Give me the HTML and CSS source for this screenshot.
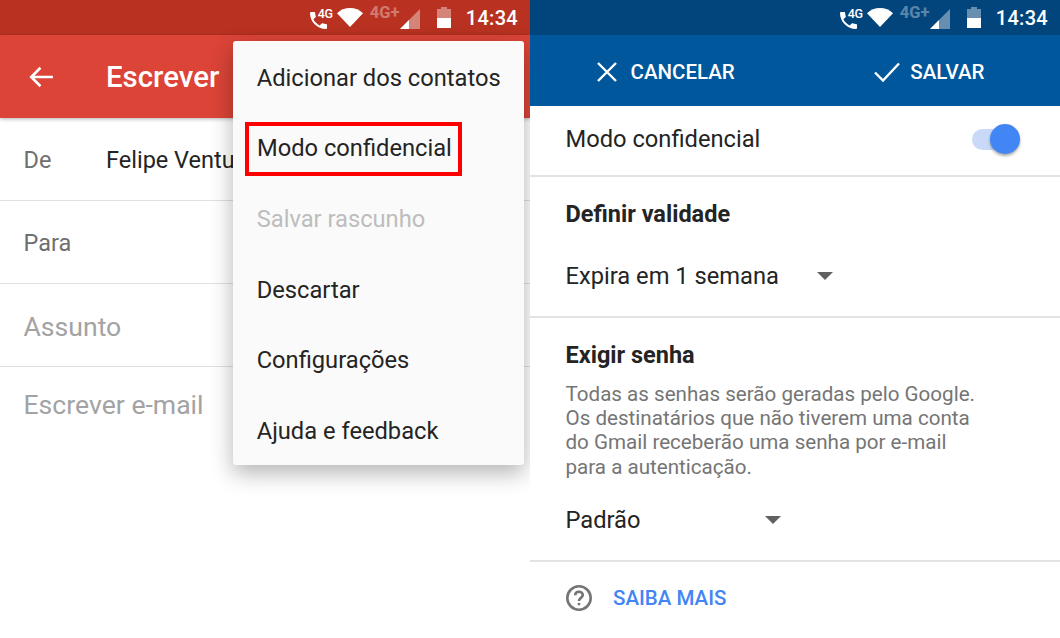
FILE: index.html
```html
<!DOCTYPE html>
<html lang="pt-BR">
<head>
  <meta charset="UTF-8" />
  <title>Modo confidencial</title>
  <link rel="stylesheet" href="styles.css">
</head>
<body>

  <div class="phone compose">
    <div class="status-bar">
      <svg class="ic-call" viewBox="3 3 18 18"><path d="M6.6 10.8c1.4 2.8 3.8 5.1 6.6 6.6l2.2-2.2c.3-.3.7-.4 1-.2 1.1.4 2.300.6 3.600.6.600 0 1 .4 1 1V20c0 .6-.4 1-1 1C10.600 21 3 13.400 3 4c0-.6.400-1 1-1h3.500c.6 0 1 .4 1 1 0 1.300.2 2.500.6 3.600.1.300 0 .7-.2 1z"/></svg>
      <span class="tiny-4g">4G</span>
      <svg class="ic-wifi" viewBox="0 0 28 20" preserveAspectRatio="none"><path d="M14 20 0 5.500C3.800 2 8.700 0 14 0s10.200 2 14 5.500z"/></svg>
      <span class="net">4G+</span>
      <svg class="ic-signal" viewBox="0 0 20 20"><path class="dim" d="M20 0v20H0z"/><path d="M0 20 9 11v9z"/></svg>
      <div class="battery"><div class="battery-fill"></div></div>
      <span class="clock">14:34</span>
    </div>

    <div class="app-bar">
      <svg class="ic-back" viewBox="0 0 24 24"><path d="M23 12H3M11.500 3.500 3 12l8.500 8.500"/></svg>
      <span class="app-title">Escrever</span>
    </div>

    <div class="field">
      <span class="field-label">De</span>
      <span class="field-value">Felipe Ventura</span>
    </div>
    <div class="field">
      <span class="field-label">Para</span>
    </div>
    <div class="field subject">
      <span class="field-hint">Assunto</span>
    </div>
    <div class="field no-line">
      <span class="field-hint">Escrever e-mail</span>
    </div>

    <div class="menu">
      <div class="menu-item">Adicionar dos contatos</div>
      <div class="menu-item"><span class="highlight">Modo confidencial</span></div>
      <div class="menu-item disabled">Salvar rascunho</div>
      <div class="menu-item">Descartar</div>
      <div class="menu-item">Configurações</div>
      <div class="menu-item">Ajuda e feedback</div>
    </div>
  </div>

  <div class="phone settings">
    <div class="status-bar">
      <svg class="ic-call" viewBox="3 3 18 18"><path d="M6.6 10.8c1.4 2.8 3.8 5.1 6.6 6.6l2.2-2.2c.3-.3.7-.4 1-.2 1.1.4 2.300.6 3.600.6.600 0 1 .4 1 1V20c0 .6-.4 1-1 1C10.600 21 3 13.400 3 4c0-.6.400-1 1-1h3.500c.6 0 1 .4 1 1 0 1.300.2 2.500.6 3.600.1.300 0 .7-.2 1z"/></svg>
      <span class="tiny-4g">4G</span>
      <svg class="ic-wifi" viewBox="0 0 28 20" preserveAspectRatio="none"><path d="M14 20 0 5.500C3.800 2 8.700 0 14 0s10.200 2 14 5.500z"/></svg>
      <span class="net">4G+</span>
      <svg class="ic-signal" viewBox="0 0 20 20"><path class="dim" d="M20 0v20H0z"/><path d="M0 20 9 11v9z"/></svg>
      <div class="battery"><div class="battery-fill"></div></div>
      <span class="clock">14:34</span>
    </div>

    <div class="action-bar">
      <div class="action">
        <svg class="ic-action" viewBox="0 0 22 22"><path d="M2 2l18 18M20 2 2 20"/></svg>
        <span>CANCELAR</span>
      </div>
      <div class="action">
        <svg class="ic-action ic-check" viewBox="0 0 28 22"><path d="M2 11.500 10 19.500 26 2.500"/></svg>
        <span>SALVAR</span>
      </div>
    </div>

    <div class="section toggle-row">
      <span>Modo confidencial</span>
      <div class="switch"><div class="switch-knob"></div></div>
    </div>

    <div class="section expiry">
      <h3>Definir validade</h3>
      <div class="select">Expira em 1 semana <i class="caret"></i></div>
    </div>

    <div class="section password">
      <h3>Exigir senha</h3>
      <p>Todas as senhas serão geradas pelo Google. Os destinatários que não tiverem uma conta do Gmail receberão uma senha por e-mail para a autenticação.</p>
      <div class="select select-short">Padrão <i class="caret"></i></div>
    </div>

    <div class="learn-more">
      <svg class="ic-help" viewBox="0 0 24 24"><circle cx="12" cy="12" r="10.800"/><path d="M8.500 9.500c0-2 1.500-3.300 3.500-3.300s3.500 1.300 3.500 3.100c0 2.600-3.500 2.600-3.500 5.400"/><circle class="dot" cx="12" cy="17.600" r="1.300"/></svg>
      <span>SAIBA MAIS</span>
    </div>
  </div>

</body>
</html>
```

FILE: styles.css
```css
* {
  box-sizing: border-box;
}

body {
  margin: 0;
  width: 1060px;
  height: 638px;
  display: flex;
  overflow: hidden;
  background: #fff;
  font-family: Roboto, "Liberation Sans", sans-serif;
  color: #242424;
}

.phone {
  width: 530px;
  height: 638px;
  position: relative;
  overflow: hidden;
}

/* status bar */
.status-bar {
  height: 35px;
  display: flex;
  align-items: center;
  justify-content: flex-end;
  padding-right: 12px;
  color: #fff;
  background: #b93221;
}

.settings .status-bar {
  background: #02457d;
}

.ic-call {
  width: 17px;
  height: 17px;
  margin-top: 5px;
  fill: #fff;
}

.tiny-4g {
  width: 14px;
  margin: -9px 0 0 -9px;
  font-size: 12.500px;
  font-weight: 500;
  letter-spacing: -0.4px;
}

.ic-wifi {
  width: 26px;
  height: 19px;
  margin-left: 5px;
  fill: #fff;
}

.net {
  width: 30px;
  margin: -11px 0 0 7px;
  font-size: 16.500px;
  font-weight: 700;
  white-space: nowrap;
  opacity: 0.35;
}

.ic-signal {
  width: 20px;
  height: 20px;
  margin-top: 3px;
  fill: #fff;
}

.ic-signal .dim {
  opacity: 0.4;
}

.battery {
  width: 14px;
  height: 19px;
  margin: 2px 15px 0 17px;
  position: relative;
  background: rgba(255, 255, 255, 0.4);
}

.battery::before {
  content: "";
  position: absolute;
  top: -2px;
  left: 4px;
  width: 6px;
  height: 2px;
  background: rgba(255, 255, 255, 0.4);
}

.battery-fill {
  position: absolute;
  left: 0;
  right: 0;
  bottom: 0;
  height: 10px;
  background: #fff;
}

.clock {
  font-size: 20px;
  font-weight: 500;
  letter-spacing: 0.3px;
}

/* left: compose */
.app-bar {
  height: 83px;
  display: flex;
  align-items: center;
  padding-left: 28px;
  background: #db4437;
  color: #fff;
  box-shadow: 0 1px 4px rgba(0, 0, 0, 0.3);
  position: relative;
}

.ic-back {
  width: 26px;
  height: 26px;
  fill: none;
  stroke: #fff;
  stroke-width: 2.400;
}

.app-title {
  font-size: 29.400px;
  font-weight: 500;
  margin-left: 52px;
}

.field {
  height: 83px;
  display: flex;
  align-items: center;
  padding: 2px 0 0 23.500px;
  border-bottom: 1px solid #e0e0e0;
  font-size: 23.500px;
}

.subject {
  padding-top: 3px;
}

.no-line {
  border-bottom: none;
  height: 72px;
}

.field-label {
  width: 82.500px;
  color: #6f6f6f;
}

.field-value {
  white-space: nowrap;
}

.field-hint {
  font-size: 26.600px;
  color: #a3a3a3;
}

.menu {
  position: absolute;
  top: 41px;
  left: 233px;
  width: 291px;
  height: 424px;
  padding-top: 1.700px;
  background: #fafafa;
  border-radius: 3px;
  box-shadow: 0 8px 22px rgba(0, 0, 0, 0.3);
}

.menu-item {
  height: 70.600px;
  display: flex;
  align-items: center;
  padding-left: 23.700px;
  font-size: 23.700px;
  white-space: nowrap;
}

.menu-item.disabled {
  color: #bdbdbd;
}

.highlight {
  padding: 8px 6px 10px 8px;
  margin-left: -11.700px;
  border: 4px solid #f00;
}

/* right: settings */
.action-bar {
  height: 71px;
  display: flex;
  align-items: center;
  padding-top: 2px;
  background: #01579b;
  color: #fff;
  font-size: 20.500px;
  font-weight: 500;
}

.action {
  display: flex;
  align-items: center;
}

.action:first-child {
  margin-left: 66px;
}

.action:last-child {
  margin-left: 138px;
}

.ic-action {
  width: 22px;
  height: 22px;
  margin-right: 12.500px;
  fill: none;
  stroke: #fff;
  stroke-width: 2.400;
}

.ic-check {
  width: 28px;
  margin-right: 9.500px;
}

.section {
  padding-left: 35.500px;
  border-bottom: 2px solid #e3e3e3;
}

.toggle-row {
  height: 71px;
  display: flex;
  align-items: center;
  justify-content: space-between;
  padding: 0 49px 3px 35.500px;
  font-size: 23.700px;
}

.switch {
  width: 39px;
  height: 21px;
  position: relative;
  border-radius: 11px;
  background: #c9daf8;
}

.switch-knob {
  position: absolute;
  top: -5px;
  right: -9px;
  width: 30px;
  height: 30px;
  border-radius: 50%;
  background: #4285f4;
  box-shadow: 0 2px 3px rgba(0, 0, 0, 0.35);
}

.section h3 {
  margin: 0;
  font-size: 23.500px;
  font-weight: 700;
}

.expiry {
  height: 141px;
  padding-top: 23px;
}

.select {
  display: flex;
  align-items: center;
  font-size: 23.700px;
  margin-top: 34px;
}

.caret {
  width: 0;
  height: 0;
  margin-left: 38px;
  border-left: 8px solid transparent;
  border-right: 8px solid transparent;
  border-top: 8px solid #616161;
}

.password {
  height: 244px;
  padding-top: 23px;
}

.password p {
  margin: 13px 0 0;
  width: 412px;
  font-size: 20.600px;
  line-height: 24.200px;
  color: #757575;
}

.select-short {
  margin-top: 27px;
}

.select-short .caret {
  margin-left: 124px;
}

.learn-more {
  display: flex;
  align-items: center;
  padding: 23px 0 0 36px;
  color: #4285f4;
  font-size: 20.500px;
  font-weight: 500;
}

.ic-help {
  width: 26px;
  height: 26px;
  margin-right: 21px;
  fill: none;
  stroke: #757575;
  stroke-width: 2.400;
}

.ic-help .dot {
  fill: #757575;
  stroke: none;
}
```
